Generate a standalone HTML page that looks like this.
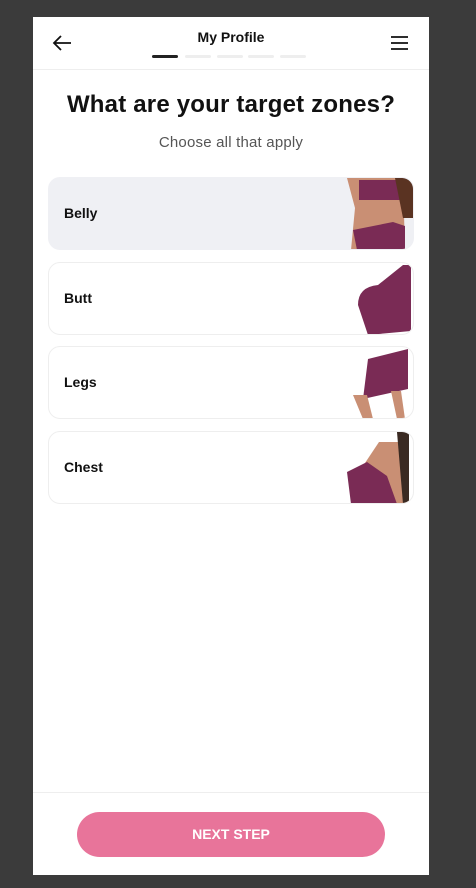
<!DOCTYPE html>
<html><head><style>
body{margin:0;background:#3b3b3b;width:476px;height:888px;position:relative;font-family:"Liberation Sans",sans-serif;overflow:hidden}
.p{position:absolute;left:33px;top:17px;width:396px;height:858px;background:#fff}
.hd{position:absolute;left:0;top:0;width:396px;height:52px;border-bottom:1px solid #eee}
.t{position:absolute;top:12px;width:396px;text-align:center;font-weight:bold;font-size:14px;color:#111}
.bar{position:absolute;top:38px;height:3px;width:26px;border-radius:2px;background:#eee}
h1{position:absolute;top:74px;left:0;width:396px;margin:0;text-align:center;font-size:24px;color:#111;letter-spacing:0.2px}
.s{position:absolute;top:117px;width:396px;text-align:center;font-size:15px;color:#555;letter-spacing:0.2px}
.c{position:absolute;left:15px;width:364px;height:71px;border:1px solid #eee;border-radius:12px;overflow:hidden;background:#fff}
.c span{position:absolute;left:15px;top:27px;font-weight:bold;font-size:14px;color:#111}
.c svg{position:absolute;right:0;top:0}
.ft{position:absolute;left:0;top:775px;width:396px;border-top:1px solid #eee}
.btn{position:absolute;left:44px;top:795px;width:308px;height:45px;border-radius:23px;background:#e8749a;color:#fff;font-weight:bold;font-size:14px;text-align:center;line-height:45px}
</style></head><body>
<div class="p">
<div class="hd">
<svg style="position:absolute;left:19px;top:18px" width="20" height="16" viewBox="0 0 20 16"><path d="M19 8H2M9 1L2 8l7 7" stroke="#111" stroke-width="1.8" fill="none"/></svg>
<div class="t">My Profile</div>
<div class="bar" style="left:119px;background:#222"></div>
<div class="bar" style="left:152px"></div>
<div class="bar" style="left:184px"></div>
<div class="bar" style="left:215px"></div>
<div class="bar" style="left:247px"></div>
<svg style="position:absolute;left:358px;top:19px" width="18" height="14"><path d="M0 1h17M0 7h17M0 13h17" stroke="#111" stroke-width="1.8"/></svg>
</div>
<h1>What are your target zones?</h1>
<div class="s">Choose all that apply</div>
<div class="c" style="top:160px;background:#eff0f4;border-color:#eff0f4"><span>Belly</span>
<svg width="80" height="72"><path d="M18 72L22 30L14 0H70L72 72Z" fill="#c98f74"/><path d="M26 2h42v20H26z" fill="#7a2b55"/><path d="M62 0h18v40L70 40z" fill="#5a3322"/><path d="M20 52l40-8 12 4v24H24z" fill="#7a2b55"/></svg></div>
<div class="c" style="top:245px"><span>Butt</span>
<svg width="80" height="72"><path d="M35 72l-10-30q0-18 20-20l25-20h8v66z" fill="#7a2b55"/></svg></div>
<div class="c" style="top:329px"><span>Legs</span>
<svg width="80" height="72"><path d="M35 12l40-10v40l-45 10z" fill="#7a2b55"/><path d="M20 48l10 24h10l-6-24zM58 44l6 28h8l-4-28z" fill="#c98f74"/></svg></div>
<div class="c" style="top:414px"><span>Chest</span>
<svg width="80" height="72"><path d="M26 72V40l20-30h20l10 30v32z" fill="#c98f74"/><path d="M14 40l20-10 20 14 10 28H18z" fill="#7a2b55"/><path d="M64 0h12v72h-6z" fill="#3a2a22"/></svg></div>
<div class="ft"></div>
<div class="btn">NEXT STEP</div>
</div>
</body></html>
